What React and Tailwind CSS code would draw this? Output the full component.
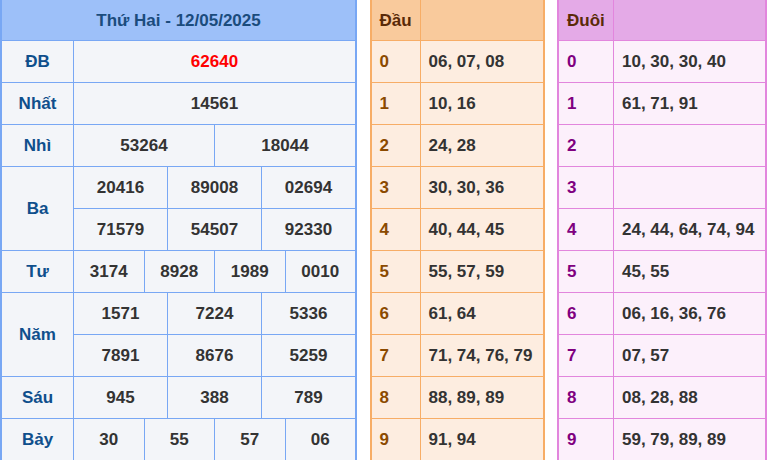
import React from "react";

const font = { fontFamily: '"Liberation Sans", Arial, sans-serif' };

const rows = [
  { label: "ĐB", lines: [[{ v: "62640", red: true }]] },
  { label: "Nhất", lines: [[{ v: "14561" }]] },
  { label: "Nhì", lines: [[{ v: "53264" }, { v: "18044" }]] },
  {
    label: "Ba",
    lines: [
      [{ v: "20416" }, { v: "89008" }, { v: "02694" }],
      [{ v: "71579" }, { v: "54507" }, { v: "92330" }],
    ],
  },
  { label: "Tư", lines: [[{ v: "3174" }, { v: "8928" }, { v: "1989" }, { v: "0010" }]] },
  {
    label: "Năm",
    lines: [
      [{ v: "1571" }, { v: "7224" }, { v: "5336" }],
      [{ v: "7891" }, { v: "8676" }, { v: "5259" }],
    ],
  },
  { label: "Sáu", lines: [[{ v: "945" }, { v: "388" }, { v: "789" }]] },
  { label: "Bảy", lines: [[{ v: "30" }, { v: "55" }, { v: "57" }, { v: "06" }]] },
];

const spanClass = { 1: "col-span-12", 2: "col-span-6", 3: "col-span-4", 4: "col-span-3" };
const rowSpanClass = { 1: "row-span-1", 2: "row-span-2" };

const dau = [
  "06, 07, 08",
  "10, 16",
  "24, 28",
  "30, 30, 36",
  "40, 44, 45",
  "55, 57, 59",
  "61, 64",
  "71, 74, 76, 79",
  "88, 89, 89",
  "91, 94",
];

const duoi = [
  "10, 30, 30, 40",
  "61, 71, 91",
  "",
  "",
  "24, 44, 64, 74, 94",
  "45, 55",
  "06, 16, 36, 76",
  "07, 57",
  "08, 28, 88",
  "59, 79, 89, 89",
];

function MainTable() {
  const cells = [];
  rows.forEach((r, ri) => {
    cells.push(
      <div
        key={`l${ri}`}
        className={`col-start-1 ${rowSpanClass[r.lines.length]} flex items-center justify-center bg-[#f3f5f9] text-[#0f4f8c]`}
      >
        {r.label}
      </div>
    );
    r.lines.forEach((line, li) => {
      line.forEach((c, ci) => {
        cells.push(
          <div
            key={`c${ri}-${li}-${ci}`}
            className={`${spanClass[line.length]} flex items-center justify-center bg-[#f3f5f9] ${
              c.red ? "text-[#ff0000]" : "text-[#333333]"
            }`}
          >
            {c.v}
          </div>
        );
      });
    });
  });
  return (
    <div className="w-[357px] border-x-2 border-[#78a7f4] bg-[#78a7f4]">
      <div className="flex h-[40px] items-center justify-center bg-[#9dc0f9] text-[#1b4c7d]">
        Thứ Hai - 12/05/2025
      </div>
      <div className="mt-px grid grid-cols-[71px_repeat(12,1fr)] auto-rows-[41px] gap-px">
        {cells}
      </div>
    </div>
  );
}

function SideTable({ title, data, width, firstCol, c }) {
  return (
    <div className={`${width} border-x-2 ${c.border} ${c.borderBg}`}>
      <div className={`grid ${firstCol} gap-px`}>
        <div className={`flex h-[40px] items-center pl-[8px] ${c.head} text-[#5a2a08]`}>{title}</div>
        <div className={`h-[40px] ${c.head}`}></div>
      </div>
      <div className={`mt-px grid ${firstCol} auto-rows-[41px] gap-px`}>
        {data.map((v, i) => (
          <React.Fragment key={i}>
            <div className={`flex items-center pl-[8px] ${c.body} ${c.digit}`}>{i}</div>
            <div className={`flex items-center pl-[8px] ${c.body} text-[#333333] whitespace-nowrap`}>{v}</div>
          </React.Fragment>
        ))}
      </div>
    </div>
  );
}

export default function App() {
  return (
    <div
      className="flex h-[460px] w-[767px] items-start justify-between overflow-hidden bg-white text-[17px] font-bold leading-none"
      style={font}
    >
      <MainTable />
      <SideTable
        title="Đầu"
        data={dau}
        width="w-[175px]"
        firstCol="grid-cols-[48px_1fr]"
        c={{
          border: "border-[#f7ad66]",
          borderBg: "bg-[#f7ad66]",
          head: "bg-[#f9ca9c]",
          body: "bg-[#fdede0]",
          digit: "text-[#8b4a00]",
        }}
      />
      <SideTable
        title="Đuôi"
        data={duoi}
        width="w-[210px]"
        firstCol="grid-cols-[54px_1fr]"
        c={{
          border: "border-[#e286dd]",
          borderBg: "bg-[#e286dd]",
          head: "bg-[#e4aae7]",
          body: "bg-[#fcf0fb]",
          digit: "text-[#800080]",
        }}
      />
    </div>
  );
}
